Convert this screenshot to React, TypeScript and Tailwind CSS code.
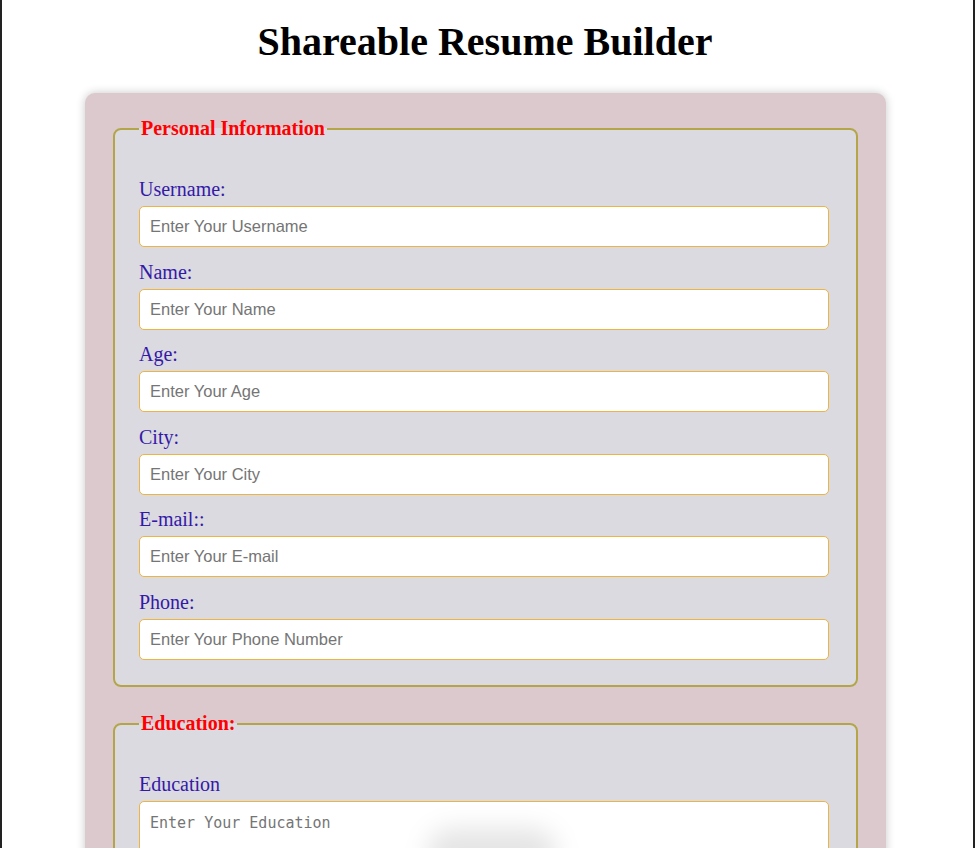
import React from "react";

const personal = [
  { label: "Username:", placeholder: "Enter Your Username" },
  { label: "Name:", placeholder: "Enter Your Name" },
  { label: "Age:", placeholder: "Enter Your Age" },
  { label: "City:", placeholder: "Enter Your City" },
  { label: "E-mail::", placeholder: "Enter Your E-mail" },
  { label: "Phone:", placeholder: "Enter Your Phone Number" },
];

function Section({ title, children }: { title: string; children: React.ReactNode }) {
  return (
    <fieldset className="rounded-[8px] border-2 border-[#b3a548] bg-[#dadae0] pl-6 pb-[25px] pt-[38px]">
      <legend className="px-[2px] text-[20px] leading-[23px] font-bold text-[#ff0000]">{title}</legend>
      <div className="flex flex-col">{children}</div>
    </fieldset>
  );
}

function Field({ label, placeholder, spaced }: { label: string; placeholder: string; spaced: string }) {
  return (
    <div className={`flex flex-col gap-[5px] ${spaced}`}>
      <label className="text-[20px] leading-[23px] text-[#3419a8]">{label}</label>
      <input
        placeholder={placeholder}
        className="h-[41px] w-[690px] rounded-[5px] border border-[#ebb443] bg-white px-[10px] font-['Liberation_Sans',Arial,sans-serif] text-[16.5px] text-black placeholder:text-[#757575] outline-none"
      />
    </div>
  );
}

export default function App() {
  return (
    <div className="relative min-h-screen overflow-hidden border-x-2 border-[#222] bg-white font-['Liberation_Serif','Times_New_Roman',serif]">
      <h1 className="pt-[20px] pb-[29px] pr-[5px] text-center text-[40px] leading-[44px] font-bold text-black">
        Shareable Resume Builder
      </h1>

      <div className="ml-[83px] mb-10 flex w-[801px] flex-col gap-[25px] rounded-[10px] bg-[#dbc9cd] px-[28px] pt-[24px] pb-[28px] shadow-[0_0_10px_rgba(0,0,0,0.22)]">
        <Section title="Personal Information">
          {personal.map((f, i) => (
            <Field
              key={f.label}
              label={f.label}
              placeholder={f.placeholder}
              spaced={i === 0 ? "" : i % 2 === 1 ? "mt-[14px]" : "mt-[13px]"}
            />
          ))}
        </Section>

        <Section title="Education:">
          <div className="flex flex-col gap-[5px]">
            <label className="text-[20px] leading-[23px] text-[#3419a8]">Education</label>
            <textarea
              placeholder="Enter Your Education"
              className="h-[100px] w-[690px] resize-y rounded-[5px] border border-[#ebb443] bg-white px-[10px] py-[10px] font-['DejaVu_Sans_Mono',monospace] text-[15px] text-black placeholder:text-[#757575] outline-none"
            />
          </div>
        </Section>
      </div>

      <div className="pointer-events-none absolute left-[425px] top-[828px] h-[50px] w-[130px] rounded-full bg-black/10 blur-md" />
    </div>
  );
}
